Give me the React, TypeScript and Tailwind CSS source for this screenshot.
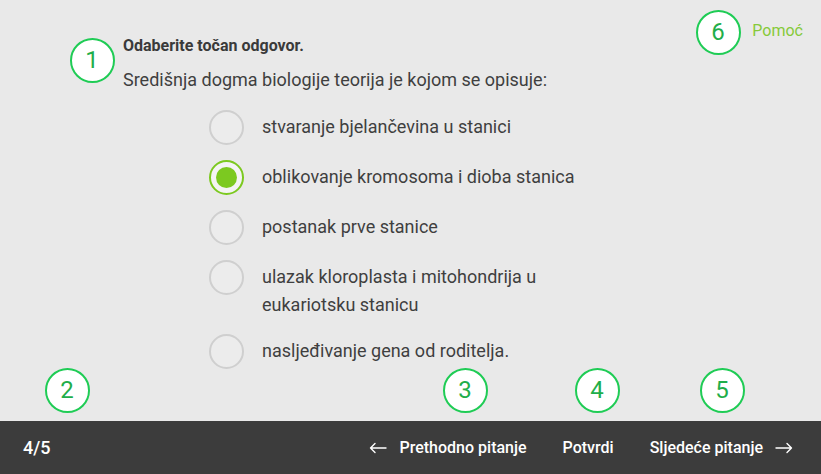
import React from "react";

const options = [
  "stvaranje bjelančevina u stanici",
  "oblikovanje kromosoma i dioba stanica",
  "postanak prve stanice",
  "ulazak kloroplasta i mitohondrija u eukariotsku stanicu",
  "nasljeđivanje gena od roditelja.",
];

function Badge({ n, x, y }: { n: number; x: number; y: number }) {
  return (
    <div
      className="absolute flex h-[45px] w-[45px] items-center justify-center rounded-full border-2 border-[#1fcc55] bg-white text-[24px] leading-none text-[#1fae4a]"
      style={{ left: x - 22.5, top: y - 22.5 }}
    >
      {n}
    </div>
  );
}

function Arrow({ dir }: { dir: "left" | "right" }) {
  return (
    <svg width="18" height="12" viewBox="0 0 18 12" fill="none" stroke="white" strokeWidth="1.4" strokeLinecap="round" strokeLinejoin="round">
      {dir === "left" ? (
        <path d="M17 6H1.5M6 1.5L1.5 6L6 10.5" />
      ) : (
        <path d="M1 6h15.5M12 1.5L16.5 6L12 10.5" />
      )}
    </svg>
  );
}

export default function App() {
  return (
    <div
      className="relative flex h-[474px] w-[821px] flex-col overflow-hidden bg-[#e9e9e9]"
      style={{ fontFamily: "Roboto, 'Noto Sans', sans-serif" }}
    >
      <div className="flex-1 pl-[123px] pt-[36px]">
        <div className="text-[16px] font-bold leading-[20px] text-[#3a3a3a]">Odaberite točan odgovor.</div>
        <div className="mt-[12px] text-[18px] leading-[24px] text-[#3f3f3f]">
          Središnja dogma biologije teorija je kojom se opisuje:
        </div>
        <div className="ml-[86px] mt-[18px] flex flex-col gap-[15px]">
          {options.map((o, i) => (
            <div key={i} className="flex items-start gap-[18px]">
              {i === 1 ? (
                <div className="flex h-[35px] w-[35px] shrink-0 items-center justify-center rounded-full border-[2.5px] border-[#7cc920] bg-[#f4f4f4]">
                  <div className="h-[21px] w-[21px] rounded-full bg-[#7cc920]" />
                </div>
              ) : (
                <div className="h-[35px] w-[35px] shrink-0 rounded-full border-2 border-[#cfcfcf] bg-[#ececec]" />
              )}
              <div className="mt-[3px] w-[335px] text-[18px] leading-[28px] text-[#3f3f3f]">{o}</div>
            </div>
          ))}
        </div>
      </div>
      <div className="flex h-[53px] items-center bg-[#3c3c3c] text-white">
        <div className="pl-[23px] text-[18px] font-medium">4/5</div>
        <div className="ml-auto flex items-center pr-[28px] text-[16px] font-medium">
          <span className="mr-[13px] flex"><Arrow dir="left" /></span>
          <span>Prethodno pitanje</span>
          <span className="ml-[36px]">Potvrdi</span>
          <span className="ml-[36px]">Sljedeće pitanje</span>
          <span className="ml-[12px] flex"><Arrow dir="right" /></span>
        </div>
      </div>
      <div className="absolute right-[18px] top-[19px] text-[16px] text-[#86c93a]">Pomoć</div>
      <Badge n={1} x={92} y={60} />
      <Badge n={6} x={718} y={32} />
      <Badge n={2} x={67} y={390} />
      <Badge n={3} x={465} y={390} />
      <Badge n={4} x={597} y={390} />
      <Badge n={5} x={722} y={390} />
    </div>
  );
}
